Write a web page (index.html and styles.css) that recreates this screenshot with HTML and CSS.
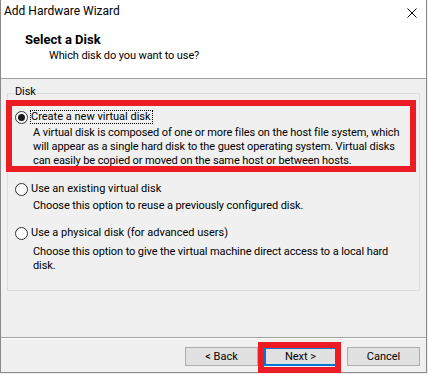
FILE: index.html
```html
<!DOCTYPE html>
<html lang="en">
<head>
    <meta charset="UTF-8">
    <meta name="viewport" content="width=device-width, initial-scale=1.0">
    <title>Add Hardware Wizard</title>
    <link rel="stylesheet" href="styles.css">
</head>
<body>
    <div class="window">
        <div class="titlebar">
            <span class="title">Add Hardware Wizard</span>
            <svg class="close" width="10" height="10" viewBox="0 0 10 10">
                <path d="M0.5 0.5 L9.5 9.5 M9.5 0.5 L0.5 9.5" stroke="#000" stroke-width="1" fill="none"/>
            </svg>
        </div>

        <div class="head">
            <div class="head-title">Select a Disk</div>
            <div class="head-sub">Which disk do you want to use?</div>
        </div>

        <div class="content">
            <div class="group">
                <div class="group-label">Disk</div>

                <div class="option option-new">
                    <span class="radio checked"></span>
                    <span class="option-label focused">Create a new virtual disk</span>
                </div>
                <div class="desc desc-new">
                    A virtual disk is composed of one or more files on the host file system, which<br>
                    will appear as a single hard disk to the guest operating system. Virtual disks<br>
                    can easily be copied or moved on the same host or between hosts.
                </div>

                <div class="option option-existing">
                    <span class="radio"></span>
                    <span class="option-label">Use an existing virtual disk</span>
                </div>
                <div class="desc desc-existing">
                    Choose this option to reuse a previously configured disk.
                </div>

                <div class="option option-physical">
                    <span class="radio"></span>
                    <span class="option-label">Use a physical disk (for advanced users)</span>
                </div>
                <div class="desc desc-physical">
                    Choose this option to give the virtual machine direct access to a local hard<br>
                    disk.
                </div>
            </div>
        </div>

        <div class="footer">
            <button class="btn">&lt; Back</button>
            <button class="btn btn-default">Next &gt;</button>
            <button class="btn btn-cancel">Cancel</button>
        </div>

        <!-- red annotation boxes drawn over the dialog -->
        <div class="mark mark-option"></div>
        <div class="mark mark-next"></div>
    </div>
</body>
</html>
```

FILE: styles.css
```css
body { margin: 0; background: #f0f0f0; font-family: Roboto, "Liberation Sans", sans-serif; font-size: 11px; letter-spacing: -0.1px; color: #000; }
.window { position: relative; width: 427px; height: 373px; box-sizing: border-box; background: #fff; border: 1px solid #8a8a8a; border-top: none; }

.titlebar { height: 29px; box-sizing: border-box; padding: 3px 9px 0 3px; display: flex; justify-content: space-between; align-items: flex-start; }
.title { font-size: 12px; line-height: 16px; letter-spacing: 0; }
.close { margin-top: 5px; display: block; }

.head { padding: 3px 0 14px 24px; border-bottom: 1px solid #a0a0a0; }
.head-title { font-size: 13px; font-weight: bold; line-height: 16px; letter-spacing: 0; }
.head-sub { line-height: 16px; margin-left: 24px; }

.content { height: 258px; box-sizing: border-box; background: #f0f0f0; padding-top: 14px; }
.group { margin: 0 6px; border: 1px solid #dcdcdc; padding-bottom: 17px; }
.group-label { width: fit-content; margin: -10px 0 0 6px; padding: 0 1px; background: #f0f0f0; line-height: 16px; }

.option { display: flex; align-items: center; padding-left: 7px; }
.option-new { margin-top: 10px; }
.option-existing { margin-top: 14px; }
.option-physical { margin-top: 13px; }
.radio { width: 13px; height: 13px; box-sizing: border-box; border: 1px solid #333; border-radius: 50%; background: #fff; display: flex; align-items: center; justify-content: center; }
.radio.checked::after { content: ""; width: 7px; height: 7px; border-radius: 50%; background: #1a1a1a; }
.option-label { margin-left: 2px; padding: 0 1px 0 0; line-height: 12px; letter-spacing: 0; border: 1px solid transparent; white-space: nowrap; }
.option-label.focused { border: 1px dotted #000; }

.desc { padding-left: 25px; line-height: 14px; white-space: nowrap; }
.desc-new { margin-top: 2px; }
.desc-existing { margin-top: 3px; }
.desc-physical { margin-top: 5px; }

.footer { height: 35px; box-sizing: border-box; background: #f0f0f0; border-top: 1px solid #a0a0a0; box-shadow: inset 0 1px 0 #fff; padding: 9px 6px 0 0; display: flex; justify-content: flex-end; align-items: flex-start; }
.btn { width: 73px; height: 19px; box-sizing: border-box; margin: 0; padding: 0; background: #e1e1e1; border: 1px solid #adadad; font: inherit; letter-spacing: 0; color: #000; line-height: 15px; }
.btn-default { margin-left: 6px; border: 2px solid #0078d7; }
.btn-cancel { margin-left: 10px; }

.mark { position: absolute; box-sizing: border-box; border: 6px solid #ed1c24; }
.mark-option { left: 5px; top: 100px; width: 410px; height: 72px; }
.mark-next { left: 257px; top: 342px; width: 83px; height: 31px; }
```
